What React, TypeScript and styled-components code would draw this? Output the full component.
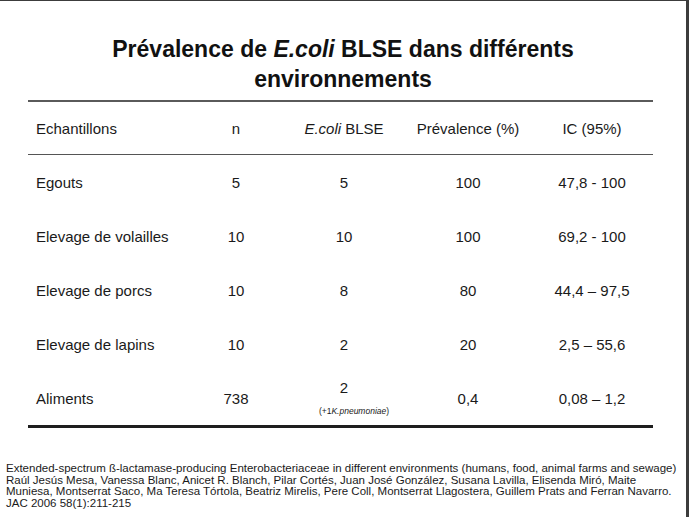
import React from "react";
import styled, { createGlobalStyle } from "styled-components";

const Global = createGlobalStyle`
  html, body { margin: 0; padding: 0; background: #fff; }
  body { font-family: "Liberation Sans", Arial, sans-serif; color: #111; }
`;

const Slide = styled.div`
  width: 689px;
  height: 517px;
  box-sizing: border-box;
  border-top: 1px solid #3c3c3c;
  border-right: 3px solid #3c3c3c;
  padding-top: 33px;
  display: flex;
  flex-direction: column;
  overflow: hidden;
`;

const Title = styled.h1`
  margin: 0;
  font-size: 23px;
  line-height: 30px;
  font-weight: bold;
  text-align: center;
  color: #111;
`;

const Table = styled.div`
  margin: 6px 0 0 28px;
  width: 625px;
  display: grid;
  grid-template-columns: 161px 94px 122px 126px 122px;
  border-top: 2px solid #5a5a5a;
  border-bottom: 3px solid #1e1e1e;
`;

const Row = styled.div`
  display: contents;
`;

const Cell = styled.div<{ $left?: boolean; $head?: boolean; $stack?: boolean }>`
  height: ${(p) => (p.$head ? "52px" : "54px")};
  display: flex;
  flex-direction: ${(p) => (p.$stack || p.$left ? "column" : "row")};
  align-items: ${(p) => (p.$left ? "flex-start" : "center")};
  justify-content: center;
  padding-left: ${(p) => (p.$left ? "8px" : "0")};
  white-space: nowrap;
  font-size: 15px;
  color: #1a1a1a;
  border-bottom: ${(p) => (p.$head ? "1px solid #555" : "none")};
`;

const Sub = styled.span`
  font-size: 8.5px;
  line-height: 10px;
  margin-top: 10px;
  margin-bottom: -12px;
  margin-left: 20px;
`;

const StackMain = styled.span`
  margin-top: -14px;
`;

const Footnote = styled.div`
  margin-top: 35px;
  padding-left: 6px;
  font-size: 11.5px;
  line-height: 11.5px;
  color: #1a1a1a;
`;

type RowData = [string, string, string, string, string];

const rows: RowData[] = [
  ["Egouts", "5", "5", "100", "47,8 - 100"],
  ["Elevage de volailles", "10", "10", "100", "69,2 - 100"],
  ["Elevage de porcs", "10", "8", "80", "44,4 \u2013 97,5"],
  ["Elevage de lapins", "10", "2", "20", "2,5 \u2013 55,6"],
];

export default function App() {
  return (
    <>
      <Global />
      <Slide>
        <Title>
          Prévalence de <i>E.coli</i> BLSE dans différents
          <br />
          environnements
        </Title>
        <Table>
          <Row>
            <Cell $left $head>Echantillons</Cell>
            <Cell $head>n</Cell>
            <Cell $head>
              <span>
                <i>E.coli</i> BLSE
              </span>
            </Cell>
            <Cell $head>Prévalence (%)</Cell>
            <Cell $head>IC (95%)</Cell>
          </Row>
          {rows.map((r) => (
            <Row key={r[0]}>
              <Cell $left>{r[0]}</Cell>
              <Cell>{r[1]}</Cell>
              <Cell>{r[2]}</Cell>
              <Cell>{r[3]}</Cell>
              <Cell>{r[4]}</Cell>
            </Row>
          ))}
          <Row>
            <Cell $left>Aliments</Cell>
            <Cell>738</Cell>
            <Cell $stack>
              <StackMain>2</StackMain>
              <Sub>
                (+1<i>K.pneumoniae</i>)
              </Sub>
            </Cell>
            <Cell>0,4</Cell>
            <Cell>0,08 – 1,2</Cell>
          </Row>
        </Table>
        <Footnote>
          Extended-spectrum ß-lactamase-producing Enterobacteriaceae in different environments (humans, food, animal farms and sewage)
          <br />
          Raúl Jesús Mesa, Vanessa Blanc, Anicet R. Blanch, Pilar Cortés, Juan José González, Susana Lavilla, Elisenda Miró, Maite
          <br />
          Muniesa, Montserrat Saco, Ma Teresa Tórtola, Beatriz Mirelis, Pere Coll, Montserrat Llagostera, Guillem Prats and Ferran Navarro.
          <br />
          JAC 2006 58(1):211-215
        </Footnote>
      </Slide>
    </>
  );
}
